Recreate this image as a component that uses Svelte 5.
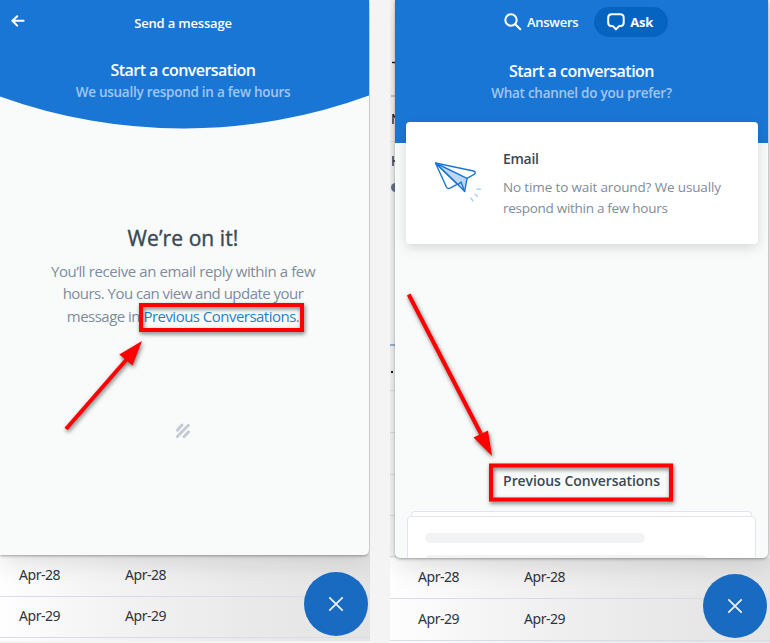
<script>
  const rows = ['Apr-28', 'Apr-29'];
</script>

{#snippet dates()}
  <div class="table">
    {#each rows as day}
      <div class="row"><span>{day}</span><span>{day}</span></div>
    {/each}
  </div>
{/snippet}

{#snippet closeButton()}
  <button class="close" aria-label="Close">
    <svg width="16" height="16" viewBox="0 0 16 16"><path d="M1.3 1.3 14.7 14.7M14.7 1.3 1.3 14.7" stroke="#eef5fc" stroke-width="1.7" fill="none" /></svg>
  </button>
{/snippet}

<main>
  <section class="shot left">
    <div class="panel">
      <svg class="curve" width="369" height="130" viewBox="0 0 369 130"><path d="M0 0H369V95.5A540 540 0 0 1 0 96.5Z" fill="#1a76d5" /></svg>
      <header>
        <div class="bar">
          <svg class="back" width="14" height="12" viewBox="0 0 14 12"><path d="M6.2 1.2 1.4 5.8 6.2 10.6M1.6 5.8H12.6" fill="none" stroke="#fff" stroke-width="2" stroke-linecap="round" stroke-linejoin="round" /></svg>
          <span class="bartitle">Send a message</span>
        </div>
        <h1>Start a conversation</h1>
        <p class="sub s1">We usually respond in a few hours</p>
      </header>
      <div class="done">
        <h2>We’re on it!</h2>
        <p class="l1">You’ll receive an email reply within a few</p>
        <p class="l2">hours. You can view and update your</p>
        <p class="l3">message in <a href="#previous">Previous Conversations</a>.</p>
      </div>
      <svg class="mark" width="14" height="16" viewBox="0 0 14 16"><path d="M1.4 7.2 6 2M1.4 13.6 12.4 2.2M8 13.8 12.6 8.8" fill="none" stroke="#c2ccd6" stroke-width="2.9" stroke-linecap="round" /></svg>
    </div>
    {@render dates()}
    {@render closeButton()}
  </section>

  <section class="shot right">
    <svg class="behind" width="6" height="643" viewBox="0 0 6 643">
      <path d="M2 62.5H6" stroke="#15152a" stroke-width="1.4" />
      <path d="M1 96H6" stroke="#7fa3c6" />
      <path d="M3 114V124M3 114 6 119" stroke="#29263a" stroke-width="1.4" fill="none" />
      <path d="M1 141.5H6" stroke="#dcdfe6" />
      <path d="M3 156V166M3 161H6" stroke="#343347" stroke-width="1.4" />
      <circle cx="5.5" cy="187.5" r="4.5" fill="#68748a" />
      <path d="M0 345H6" stroke="#7799c5" stroke-width="1.5" />
      <path d="M1 372H3" stroke="#15152a" stroke-width="2" />
      <path d="M0 390.5H6M0 432.5H6M0 474.5H6M0 515.5H6M0 556.5H6" stroke="#d9dce8" />
    </svg>
    <div class="panel">
      <header>
        <nav>
          <span class="tab"><svg width="18" height="18" viewBox="0 0 18 18"><circle cx="7" cy="7" r="5.7" /><path d="M11.2 11.2 16.3 16.3" /></svg><b class="answers">Answers</b></span>
          <span class="tab active"><svg width="18" height="18" viewBox="0 0 18 18"><path d="M4.6 1.3H13.2Q16.7 1.3 16.7 4.8V9.7Q16.7 12.8 13.6 13.1L11.8 13.3 9 16.4 6.2 13.3 4.3 13.1Q1.2 12.8 1.2 9.7V4.8Q1.2 1.3 4.6 1.3Z" /></svg><b class="ask">Ask</b></span>
        </nav>
        <h1>Start a conversation</h1>
        <p class="sub s2">What channel do you prefer?</p>
      </header>
      <article>
        <svg class="plane" width="50" height="44" viewBox="0 0 50 44" fill="none" stroke="#1a76d5" stroke-width="1.4" stroke-linejoin="round">
          <path d="M1.5 3 33 18.3 30.7 31.5 24 24.8Z" fill="#bcd8f4" />
          <path d="M1.5 3 39.5 11Q42.5 12 40.5 14.2L33 18.3M1.5 3 12.5 27.2Q13.6 29.3 16 28.2L24 23.8M1.5 3 24 24.8" />
          <path d="M24 24.8 27 22 30.7 31.5" />
          <path d="M43 29.3H46.5M41 34.3 43.4 36.4M37 38 39 41" stroke="#add0f1" stroke-linecap="round" />
        </svg>
        <div class="copy">
          <h3>Email</h3>
          <p class="e1">No time to wait around? We usually</p>
          <p class="e2">respond within a few hours</p>
        </div>
      </article>
      <h3 class="previous">Previous Conversations</h3>
      <div class="stack">
        <div class="tip"></div>
        <div class="sheet"><i class="short"></i><i class="long"></i></div>
      </div>
    </div>
    {@render dates()}
    {@render closeButton()}
  </section>

  <svg class="notes" width="770" height="643" viewBox="0 0 770 643">
    <g fill="none" stroke="#f00" stroke-width="4">
      <rect x="141" y="305" width="161" height="25" />
      <rect x="491" y="465.5" width="180" height="34" />
      <path d="M66 429 127 359" />
      <path d="M408.700 294.500 481 434" />
    </g>
    <path d="M142 341 132.500 365.500 119.300 354.500ZM492 456 473.500 437.500 488 430.500Z" fill="#f00" />
  </svg>
</main>

<style>
  :global(body) { margin: 0; background: #f4f4f4; }
  main { position: relative; display: flex; gap: 20px; width: 770px; height: 643px; overflow: hidden; background: #f4f4f4; font-family: "Open Sans", "Noto Sans", sans-serif; }
  h1, h2, h3, p { margin: 0; font-weight: 400; white-space: nowrap; }
  .shot { position: relative; width: 370px; height: 641px; display: flex; flex-direction: column; overflow: hidden; flex: none; }
  .shot.right { width: 380px; height: 643px; }
  .panel { position: relative; z-index: 2; box-sizing: border-box; width: 369px; height: 555px; flex: none; display: flex; flex-direction: column; background: #f9fbfb; border-radius: 0 0 5px 0; box-shadow: 0 1px 3px #0005, 0 5px 28px #0002; overflow: hidden; }
  .right .panel { width: 373px; height: 557.500px; margin-left: 5px; border-radius: 0 0 5px 5px; }
  .curve { position: absolute; top: 0; left: 0; }
  header { position: relative; display: flex; flex-direction: column; align-items: center; color: #fff; }
  .right header { background: #1a76d5; height: 143px; flex: none; }
  .bar { width: 100%; height: 46px; display: flex; align-items: center; justify-content: center; }
  .back { position: absolute; left: 11px; top: 15px; }
  .bartitle { font-size: 13px; font-weight: 600; letter-spacing: -.18px; margin-right: 3px; }
  h1 { font-size: 16px; line-height: 24px; font-weight: 600; letter-spacing: -.53px; margin: 12px 3px 0 0; }
  .sub { font-size: 13.500px; line-height: 20px; font-weight: 600; color: #a0c6ee; letter-spacing: -.26px; margin-right: 3px; }
  nav { display: flex; align-items: center; gap: 6px; height: 44px; margin-bottom: 1px; margin-right: 1px; }
  .tab { box-sizing: border-box; height: 30px; border-radius: 15px; display: flex; align-items: center; gap: 5px; padding: 0 10px; font-size: 13px; }
  .tab svg { fill: none; stroke: #fff; stroke-width: 2; stroke-linecap: round; stroke-linejoin: round; }
  .tab b { font-weight: 600; letter-spacing: -.25px; }
  .tab .ask { font-weight: 700; }
  .active { background: #0564bf; padding: 0 15px 0 13px; }
  .right h1 { margin: 14px 0 0; }
  .right .sub { margin: 0; }
  .done { margin-top: 117.500px; display: flex; flex-direction: column; align-items: center; color: #7d8c9b; padding-right: 3px; }
  h2 { font-size: 21px; line-height: 36px; margin-bottom: 4px; color: #394956; -webkit-text-stroke: .4px; letter-spacing: .08px; }
  .done p { font-size: 15px; line-height: 22.700px; letter-spacing: -.4px; }
  .done .l2, .done .l3 { letter-spacing: -.52px; }
  a { color: #1f81cd; text-decoration: none; }
  .mark { position: absolute; left: 176px; top: 423px; }
  article { position: relative; box-sizing: border-box; width: 352px; height: 122px; margin: -21px 0 0 11px; flex: none; display: flex; background: #fff; border-radius: 4px; box-shadow: 0 4px 12px #0002; padding: 27px 0 0 28px; }
  .plane { margin-top: 11px; flex: none; }
  .copy { padding-left: 19px; color: #7d8c9b; }
  h3 { font-size: 14px; line-height: 20px; color: #394956; font-weight: 600; letter-spacing: -.3px; }
  .copy h3 { margin-bottom: 8px; }
  .copy p { font-size: 13.500px; line-height: 20.500px; letter-spacing: -.14px; }
  .copy .e2 { letter-spacing: -.28px; }
  .previous { align-self: center; margin-top: 227px; letter-spacing: -.08px; }
  .stack { margin: 20px 0 0 12px; width: 349px; display: flex; flex-direction: column; align-items: center; }
  .tip, .sheet { box-sizing: border-box; background: #fff; border: 1px solid #e2e6ec; border-radius: 4px 4px 0 0; }
  .tip { width: 341px; height: 5px; border-bottom: 0; }
  .sheet { width: 349px; height: 60px; padding: 16px 0 0 17px; display: flex; flex-direction: column; gap: 12px; }
  i { height: 10px; border-radius: 5px; background: #f2f3f5; }
  .short { width: 220px; }
  .long { width: 282px; }
  .table { flex: 1; background: linear-gradient(90deg, #fefefe 0, #f3f3f3 30%, #eaeaea 65%, #e4e4e4 100%); }
  .row { box-sizing: border-box; height: 41.500px; border-bottom: 1px solid #d8dce8; display: flex; align-items: center; padding: 0 0 2px 19px; font: 14px "Noto Sans", sans-serif; color: #30343d; letter-spacing: -.45px; }
  .right .row { padding-left: 28px; }
  .row span { width: 106px; }
  .close { position: absolute; z-index: 3; left: 304px; top: 572px; width: 64px; height: 64px; border: 0; padding: 0; border-radius: 50%; background: #196bc2; display: flex; align-items: center; justify-content: center; }
  .right .close { left: 313px; top: 574px; }
  .behind { position: absolute; left: 0; top: 0; z-index: 1; }
  .notes { position: absolute; left: 0; top: 0; z-index: 5; filter: drop-shadow(1px 2px 2px #0008); pointer-events: none; }
</style>
